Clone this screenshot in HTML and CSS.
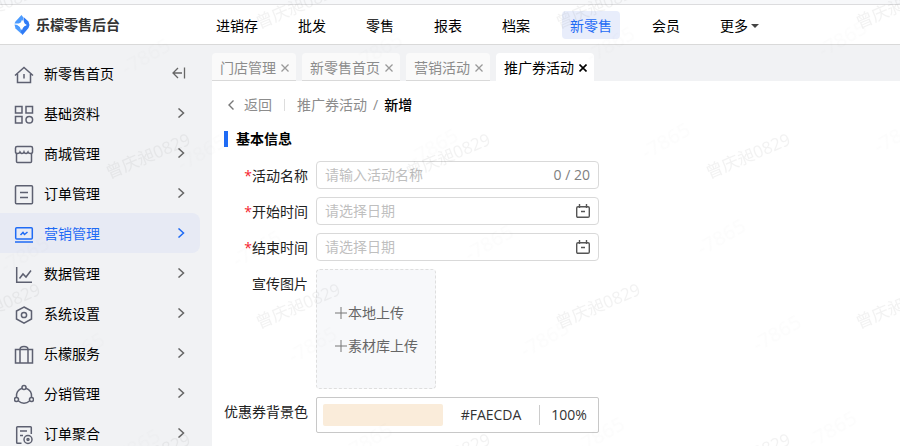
FILE: index.html
```html
<!DOCTYPE html>
<html lang="zh-CN">
  <head>
    <meta charset="utf-8" />
    <title>乐檬零售后台</title>
    <link rel="stylesheet" href="styles.css">
  </head>
  <body>

    <header class="header">
      <a class="logo" href="#">
        <svg width="16" height="20" viewBox="0 0 16 20">
          <path fill="#4b9bff" d="M7.500 0L9 2V4.500Q8 8 4.500 8.500H0.500L1.500 6.500Z"/>
          <path fill="#2f7bf6" d="M9.500 2L14.500 6.500L15.500 10L14.500 13L8.500 20L7 18V15.500Q8 12 12.500 10Q9 8.500 9.500 2Z"/>
          <path fill="#4b9bff" d="M0.500 9.500L3.500 10Q6.500 11.500 7 15V18.500L1.500 13.500Z"/>
          <path fill="#fff" d="M8 4.500C9 8 10 9 12.800 10C10 11 9 12 8 15.500C7 12 6 11 3.200 10C6 9 7 8 8 4.500Z"/>
        </svg>
        <span>乐檬零售后台</span>
      </a>
      <nav class="nav">
        <a href="#">进销存</a>
        <a href="#">批发</a>
        <a href="#">零售</a>
        <a href="#">报表</a>
        <a href="#">档案</a>
        <a href="#" class="active">新零售</a>
        <a href="#">会员</a>
        <a href="#" class="more">更多<span class="caret"></span></a>
      </nav>
    </header>

    <div class="layout">
      <aside class="sidebar">
        <a class="menu-item" href="#">
          <svg class="icon" viewBox="0 0 20 24"><path d="M1 14.500L10 6.500L19 14.500M3.500 13V21.500H16.500V13M10 13V17.500"/></svg>
          <span>新零售首页</span>
          <svg class="fold" viewBox="0 0 14 12"><path d="M6 1L1 6L6 11M1 6H10M12.500 0.500V11.500"/></svg>
        </a>
        <a class="menu-item" href="#">
          <svg class="icon" viewBox="0 0 20 24"><path d="M1.500 5.500H8V12H1.500ZM12 5.500H18.500V12H12ZM1.500 15.500H8V22H1.500Z"/><circle cx="15.300" cy="18.800" r="3.300"/></svg>
          <span>基础资料</span>
          <svg class="arrow" viewBox="0 0 8 10"><path d="M1.500 0.500L6.500 5L1.500 9.500"/></svg>
        </a>
        <a class="menu-item" href="#">
          <svg class="icon" viewBox="0 0 20 24"><path d="M2.500 12.500V20.500Q2.500 21.500 3.500 21.500H16.500Q17.500 21.500 17.500 20.500V12.500M3 5.500H17Q18.500 5.500 18.500 7V11Q18.500 12.500 16.500 12.500Q14.500 12.500 14 11Q13 12.500 12 12.500Q10.500 12.500 10 11Q9.500 12.500 8 12.500Q7 12.500 6 11Q5.500 12.500 3.500 12.500Q1.500 12.500 1.500 11V7Q1.500 5.500 3 5.500Z"/></svg>
          <span>商城管理</span>
          <svg class="arrow" viewBox="0 0 8 10"><path d="M1.500 0.500L6.500 5L1.500 9.500"/></svg>
        </a>
        <a class="menu-item" href="#">
          <svg class="icon" viewBox="0 0 20 24"><rect x="1.500" y="4.700" width="17" height="18" rx="1"/><path d="M6 11.500H14M6 16.500H14"/></svg>
          <span>订单管理</span>
          <svg class="arrow" viewBox="0 0 8 10"><path d="M1.500 0.500L6.500 5L1.500 9.500"/></svg>
        </a>
        <a class="menu-item active" href="#">
          <svg class="icon" viewBox="0 0 20 24"><rect x="1.700" y="6.700" width="16.600" height="11.300" rx="1"/><path d="M1 21H19M6.500 14L9 11.500L10.500 13.500L13.500 11"/></svg>
          <span>营销管理</span>
          <svg class="arrow" viewBox="0 0 8 10"><path d="M1.500 0.500L6.500 5L1.500 9.500"/></svg>
        </a>
        <a class="menu-item" href="#">
          <svg class="icon" viewBox="0 0 20 24"><path d="M2.700 6V21.300H18M5.500 17.500L9 13L12 16L17 9.500"/></svg>
          <span>数据管理</span>
          <svg class="arrow" viewBox="0 0 8 10"><path d="M1.500 0.500L6.500 5L1.500 9.500"/></svg>
        </a>
        <a class="menu-item" href="#">
          <svg class="icon" viewBox="0 0 20 24"><path d="M10 6L17.500 10V18L10 22.200L2.500 18V10Z"/><circle cx="10" cy="14" r="2.600"/></svg>
          <span>系统设置</span>
          <svg class="arrow" viewBox="0 0 8 10"><path d="M1.500 0.500L6.500 5L1.500 9.500"/></svg>
        </a>
        <a class="menu-item" href="#">
          <svg class="icon" viewBox="0 0 20 24"><path d="M1.500 8.500H18.500V22H1.500ZM6 22V8.500Q6 5.500 10 5.500Q14 5.500 14 8.500V22"/></svg>
          <span>乐檬服务</span>
          <svg class="arrow" viewBox="0 0 8 10"><path d="M1.500 0.500L6.500 5L1.500 9.500"/></svg>
        </a>
        <a class="menu-item" href="#">
          <svg class="icon" viewBox="0 0 20 24"><circle cx="10" cy="6.500" r="2"/><circle cx="2.500" cy="18.500" r="2"/><circle cx="17.500" cy="18.500" r="2"/><path d="M8 7.200A8 8 0 0 0 2.500 16.300M12 7.200A8 8 0 0 1 17.500 16.300M4.500 20A8 8 0 0 0 15.500 20"/></svg>
          <span>分销管理</span>
          <svg class="arrow" viewBox="0 0 8 10"><path d="M1.500 0.500L6.500 5L1.500 9.500"/></svg>
        </a>
        <a class="menu-item" href="#">
          <svg class="icon" viewBox="0 0 20 24"><path d="M7.500 22.300H3.500Q2.700 22.300 2.700 21.500V6.500Q2.700 5.700 3.500 5.700H16.500Q17.300 5.700 17.300 6.500V13M6 10H13M6 14.500H9"/><circle cx="14" cy="18.500" r="4"/><circle cx="14" cy="18.500" r="1"/></svg>
          <span>订单聚合</span>
          <svg class="arrow" viewBox="0 0 8 10"><path d="M1.500 0.500L6.500 5L1.500 9.500"/></svg>
        </a>
      </aside>

      <main class="main">
        <div class="tabs">
          <button type="button" class="tab">门店管理<svg class="close" viewBox="0 0 8 8"><path d="M0.500 0.500L7.500 7.500M7.500 0.500L0.500 7.500"/></svg></button>
          <button type="button" class="tab">新零售首页<svg class="close" viewBox="0 0 8 8"><path d="M0.500 0.500L7.500 7.500M7.500 0.500L0.500 7.500"/></svg></button>
          <button type="button" class="tab">营销活动<svg class="close" viewBox="0 0 8 8"><path d="M0.500 0.500L7.500 7.500M7.500 0.500L0.500 7.500"/></svg></button>
          <button type="button" class="tab active">推广券活动<svg class="close" viewBox="0 0 8 8"><path d="M0.500 0.500L7.500 7.500M7.500 0.500L0.500 7.500"/></svg></button>
        </div>

        <div class="content">
          <div class="breadcrumb">
            <a class="back" href="#"><svg width="8" height="10" viewBox="0 0 8 10"><path d="M6.500 0.500L2 5L6.500 9.500"/></svg>返回</a>
            <a class="parent" href="#">推广券活动</a>
            <span class="slash">/</span>
            <span class="current">新增</span>
          </div>

          <h2 class="section-title">基本信息</h2>

          <form class="form">
            <div class="row">
              <label for="name" class="required">活动名称</label>
              <div class="field">
                <input type="text" id="name" maxlength="20" placeholder="请输入活动名称">
                <span class="count">0 / 20</span>
              </div>
            </div>
            <div class="row">
              <label for="start" class="required">开始时间</label>
              <div class="field">
                <input type="text" id="start" placeholder="请选择日期">
                <svg class="calendar" viewBox="0 0 14 14"><path d="M2 2.700H12Q13.300 2.700 13.300 4V12Q13.300 13.300 12 13.300H2Q0.700 13.300 0.700 12V4Q0.700 2.700 2 2.700ZM3.500 0V4M10.500 0V4M5 7.500H9"/></svg>
              </div>
            </div>
            <div class="row">
              <label for="end" class="required">结束时间</label>
              <div class="field">
                <input type="text" id="end" placeholder="请选择日期">
                <svg class="calendar" viewBox="0 0 14 14"><path d="M2 2.700H12Q13.300 2.700 13.300 4V12Q13.300 13.300 12 13.300H2Q0.700 13.300 0.700 12V4Q0.700 2.700 2 2.700ZM3.500 0V4M10.500 0V4M5 7.500H9"/></svg>
              </div>
            </div>
            <div class="row">
              <label for="local">宣传图片</label>
              <div class="upload">
                <button type="button" id="local"><svg width="12" height="12" viewBox="0 0 12 12"><path d="M6 0V12M0 6H12"/></svg>本地上传</button>
                <button type="button"><svg width="12" height="12" viewBox="0 0 12 12"><path d="M6 0V12M0 6H12"/></svg>素材库上传</button>
              </div>
            </div>
            <div class="row">
              <label for="hex">优惠券背景色</label>
              <div class="color-picker">
                <button type="button" class="swatch" aria-label="选择颜色"></button>
                <input type="text" id="hex" class="hex" value="#FAECDA">
                <input type="text" class="alpha" value="100%" aria-label="透明度">
              </div>
            </div>
          </form>
        </div>
      </main>
    </div>

    <svg class="watermark" aria-hidden="true">
      <defs>
        <pattern id="mark-name" x="80" y="100" width="300" height="300" patternUnits="userSpaceOnUse">
          <text transform="translate(29 79) rotate(-23)">曾庆昶0829</text>
          <text transform="translate(179 229) rotate(-23)">曾庆昶0829</text>
        </pattern>
        <pattern id="mark-phone" width="204" height="111" patternUnits="userSpaceOnUse" patternTransform="translate(530 158) rotate(-30)">
          <text class="faint" x="100" y="60">-7865</text>
        </pattern>
      </defs>
      <rect width="100%" height="100%" fill="url(#mark-name)"/>
      <rect width="100%" height="100%" fill="url(#mark-phone)"/>
    </svg>

  </body>
</html>
```
FILE: styles.css
```css
* {
  box-sizing: border-box;
}

body {
  margin: 0;
  height: 100vh;
  display: flex;
  flex-direction: column;
  overflow: hidden;
  background: #f1f2f4;
  border-top: 4px solid #f7f8fa;
  font-family: "Open Sans", "Noto Sans CJK SC", sans-serif;
  font-size: 14px;
  line-height: 20px;
  color: #000;
}

a {
  color: inherit;
  text-decoration: none;
}

button,
input {
  font: inherit;
  color: inherit;
  border: none;
  background: none;
  padding: 0;
  margin: 0;
  outline: none;
}

button {
  cursor: pointer;
}

svg {
  flex-shrink: 0;
  fill: none;
}

/* header */
.header {
  display: flex;
  align-items: center;
  flex-shrink: 0;
  height: 41px;
  background: #fff;
  border-top: 1px solid #dcdcde;
  border-bottom: 1px solid #d9d9d9;
}

.logo {
  display: flex;
  align-items: center;
  gap: 6px;
  width: 208px;
  padding-left: 14px;
  font-weight: bold;
  color: #333;
}

.nav {
  display: flex;
  gap: 24px;
}

.nav a {
  padding: 5px 8px 3px;
  border-radius: 4px;
  white-space: nowrap;
}

.nav .active {
  background: #e8edfb;
  color: #1f6bf5;
}

.nav .more {
  display: flex;
  align-items: center;
  gap: 3px;
}

.caret {
  border: 4px solid transparent;
  border-top-color: #444;
  border-bottom: none;
}

/* sidebar */
.layout {
  display: flex;
  flex: 1;
  min-height: 0;
}

.sidebar {
  width: 200px;
  flex-shrink: 0;
  padding-top: 8px;
  overflow: hidden;
}

.menu-item {
  display: flex;
  align-items: center;
  gap: 10px;
  height: 40px;
  padding: 0 14px;
  border-radius: 0 8px 8px 0;
}

.menu-item span {
  flex: 1;
  padding-top: 2px;
}

.menu-item.active {
  background: #e7eaf4;
  color: #1f6bf5;
}

.icon {
  width: 20px;
  height: 24px;
  stroke: #5d6070;
  stroke-width: 1.5;
}

.arrow {
  width: 8px;
  height: 10px;
  margin-right: 1px;
  stroke: #666;
  stroke-width: 1.5;
}

.fold {
  width: 14px;
  height: 12px;
  stroke: #666;
  stroke-width: 1.3;
}

.active .icon,
.active .arrow {
  stroke: #1f6bf5;
}

/* main area */
.main {
  flex: 1;
  min-width: 0;
  display: flex;
  flex-direction: column;
  padding: 8px 0 0 12px;
}

.tabs {
  display: flex;
  gap: 6px;
}

.tab {
  display: flex;
  align-items: center;
  gap: 5px;
  height: 28px;
  padding: 2px 7px 0 8px;
  background: #fafafa;
  border-bottom: 1px solid #d9d9d9;
  border-radius: 4px 4px 0 0;
  color: #8c8c8c;
}

.tab.active {
  background: #fff;
  border-bottom-color: #fff;
  color: #000;
}

.close {
  width: 8px;
  height: 8px;
  stroke: #999;
  stroke-width: 1.3;
}

.active .close {
  stroke: #000;
  stroke-width: 1.6;
}

.content {
  flex: 1;
  background: #fff;
  padding: 14px 12px;
}

.breadcrumb {
  display: flex;
  align-items: center;
  color: #8c8c8c;
}

.back {
  display: flex;
  align-items: center;
  gap: 9px;
  padding: 0 12px 0 3px;
}

.back svg {
  stroke: #777;
  stroke-width: 1.4;
}

.parent {
  display: flex;
  align-items: center;
  gap: 12px;
}

.parent::before {
  content: "";
  width: 1px;
  height: 12px;
  background: #ddd;
}

.slash {
  padding: 0 6px;
}

.current {
  color: #000;
  font-weight: 500;
}

.section-title {
  display: flex;
  align-items: center;
  gap: 8px;
  margin: 14px 0 12px;
  font-size: 14px;
  line-height: 20px;
}

.section-title::before {
  content: "";
  width: 4px;
  height: 16px;
  background: #1f6bf5;
}

/* form */
.form {
  display: flex;
  flex-direction: column;
  gap: 8px;
}

.row {
  display: flex;
  align-items: flex-start;
  gap: 8px;
}

.row label {
  width: 84px;
  flex-shrink: 0;
  line-height: 30px;
  height: 28px;
  text-align: right;
  white-space: nowrap;
  color: #222;
}

.required::before {
  content: "*";
  color: #f5222d;
}

.field {
  display: flex;
  align-items: center;
  width: 283px;
  height: 28px;
  padding: 0 8px;
  background: #fff;
  border: 1px solid #d9d9d9;
  border-radius: 4px;
}

.field input {
  flex: 1;
  min-width: 0;
}

.field input::placeholder {
  color: #bfbfbf;
}

.count {
  color: #808080;
}

.calendar {
  width: 14px;
  height: 14px;
  stroke: #555;
  stroke-width: 1.4;
}

.upload {
  display: flex;
  flex-direction: column;
  justify-content: center;
  align-items: flex-start;
  width: 120px;
  height: 120px;
  padding-left: 18px;
  background: #f7f8fa;
  border: 1px dashed #dedede;
  border-radius: 4px;
  color: #666;
}

.upload button {
  display: flex;
  align-items: center;
  gap: 1px;
  height: 33px;
}

.upload svg {
  stroke: #777;
  stroke-width: 1;
}

.color-picker {
  display: flex;
  align-items: center;
  width: 283px;
  height: 36px;
  padding-left: 6px;
  border: 1px solid #c8c8c8;
  border-radius: 2px;
  color: #333;
}

.color-picker input {
  height: 20px;
  text-align: center;
}

.swatch {
  width: 120px;
  height: 22px;
  background: #faecda;
  border-radius: 2px;
}

.hex {
  flex: 1;
  min-width: 0;
}

.color-picker .alpha {
  width: 59px;
  border-left: 1px solid #ccc;
}

/* page watermark */
.watermark {
  position: absolute;
  top: 0;
  left: 0;
  width: 100%;
  height: 100%;
  pointer-events: none;
}

.watermark text {
  font-size: 17px;
  fill: rgba(0, 0, 0, 0.05);
}

.watermark .faint {
  font-size: 20px;
  fill: rgba(0, 0, 0, 0.01);
}
```
